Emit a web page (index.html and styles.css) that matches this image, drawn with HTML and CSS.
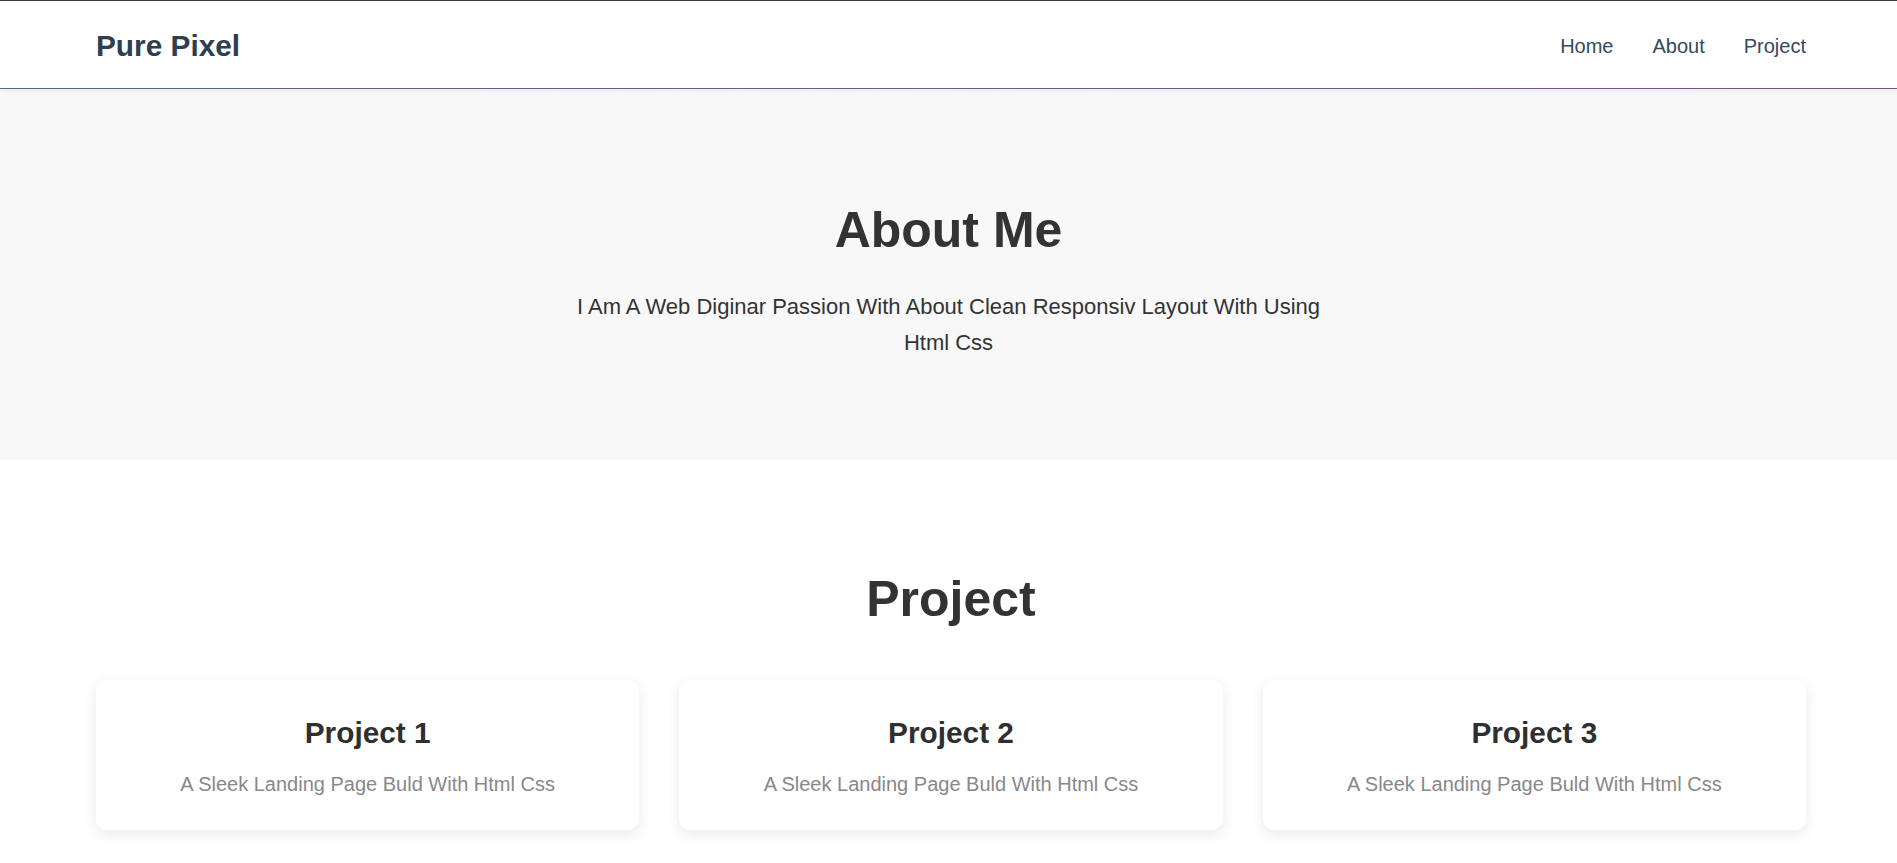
FILE: index.html
```html
<!DOCTYPE html>
<html lang="en">
<head>
<meta charset="utf-8">
<title>Pure Pixel</title>
<link rel="stylesheet" href="styles.css">
</head>
<body>
  <header class="site-header">
    <div class="logo">Pure Pixel</div>
    <nav class="nav">
      <a href="#" class="nav-link">Home</a>
      <a href="#" class="nav-link">About</a>
      <a href="#" class="nav-link">Project</a>
    </nav>
  </header>
  <section class="hero">
    <h2 class="hero-title">About Me</h2>
    <p class="hero-text">I am a web diginar passion with about clean responsiv layout with using html css</p>
  </section>
  <section class="projects">
    <h2 class="section-title">Project</h2>
    <div class="cards">
      <div class="card">
        <h3 class="card-title">Project 1</h3>
        <p class="card-text">A sleek landing page buld with html css</p>
      </div>
      <div class="card">
        <h3 class="card-title">Project 2</h3>
        <p class="card-text">A sleek landing page buld with html css</p>
      </div>
      <div class="card">
        <h3 class="card-title">Project 3</h3>
        <p class="card-text">A sleek landing page buld with html css</p>
      </div>
    </div>
  </section>
</body>
</html>
```
FILE: styles.css
```css
* { box-sizing: border-box; }
html, body { margin: 0; padding: 0; }
body {
  font-family: "Liberation Sans", Arial, sans-serif;
  color: #333;
  background: #fff;
  text-transform: capitalize;
}
.site-header {
  height: 89px;
  border-top: 1px solid #3a3a3a;
  display: flex;
  align-items: center;
  justify-content: space-between;
  padding: 0 91px 0 96px;
  background: #fff;
  position: relative;
  box-shadow: 0 2px 6px rgba(0,0,0,0.05);
}
.site-header::after {
  content: "";
  position: absolute;
  left: 0; right: 0; bottom: 0;
  height: 1px;
  background: linear-gradient(to right, #4f6a8c, #6a5c98 50%, #7c4f8e);
}
.logo {
  font-size: 29.8px;
  font-weight: 700;
  color: #2c3e50;
  margin-top: 2px;
}
.nav {
  display: flex;
  gap: 39px;
  margin-top: 2px;
}
.nav-link {
  font-size: 20px;
  color: #34495e;
  text-decoration: none;
}
.hero {
  background: #f8f8f8;
  height: 371px;
  padding-top: 111px;
  text-align: center;
}
.hero-title {
  margin: 0;
  font-size: 50px;
  line-height: 1.2;
  font-weight: 700;
  color: #333;
}
.hero-text {
  max-width: 765px;
  margin: 29px auto 0;
  font-size: 22px;
  line-height: 1.65;
  color: #333;
}
.projects {
  padding: 109px 91px 60px 96px;
  text-align: center;
}
.section-title {
  margin: 0;
  font-size: 50px;
  line-height: 1.2;
  font-weight: 700;
  color: #333;
}
.cards {
  margin-top: 51px;
  display: grid;
  grid-template-columns: repeat(3, 1fr);
  gap: 40px;
}
.card {
  background: #fff;
  border-radius: 11px;
  box-shadow: 0 4px 14px rgba(0,0,0,0.09);
  padding: 35px 30px 32px;
  height: 150px;
}
.card-title {
  margin: 0;
  font-size: 29.8px;
  line-height: 1.2;
  font-weight: 700;
  color: #2f2f2f;
}
.card-text {
  margin: 18px 0 0;
  font-size: 20px;
  line-height: 1.5;
  color: #888;
}
```
